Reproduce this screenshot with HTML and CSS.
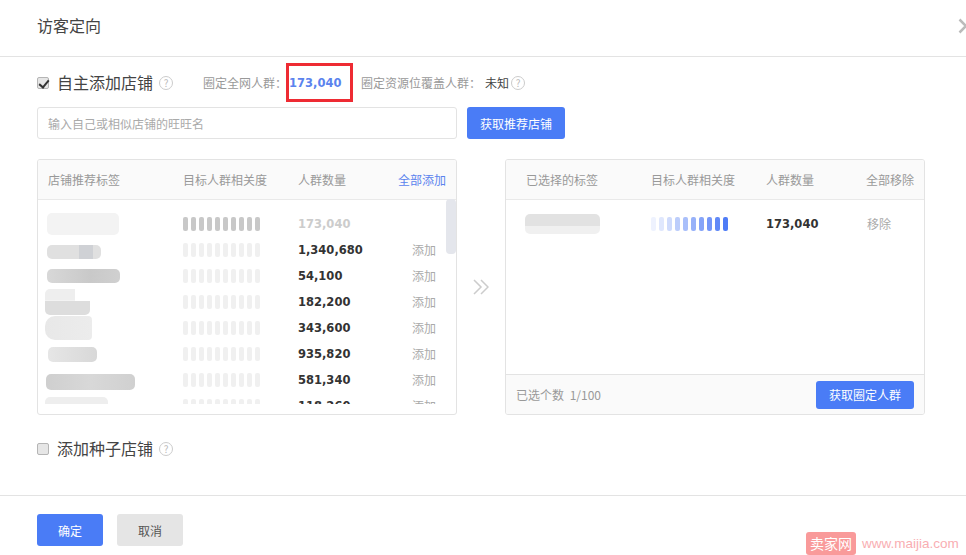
FILE: index.html
```html
<!DOCTYPE html>
<html lang="zh">
<head>
<meta charset="utf-8">
<title>访客定向</title>
<link rel="stylesheet" href="styles.css">
</head>
<body>
<div class="dialog">
  <header class="head">访客定向</header>
  <svg class="close" width="10" height="16" viewBox="0 0 10 16"><path d="M1.500 1.500 8 8l-6.500 6.500" fill="none" stroke="#bbb" stroke-width="2.500"/></svg>
  <main class="main">
    <div class="opt">
      <label class="check"><input type="checkbox" class="cb" checked><span>自主添加店铺</span></label>
      <span class="help">?</span>
      <span class="stat s1">圈定全网人群：</span>
      <b class="hl">173,040</b>
      <span class="stat s2">圈定资源位覆盖人群：</span>
      <span class="unk">未知</span>
      <span class="help small">?</span>
    </div>
    <div class="search">
      <input class="inp" type="text" placeholder="输入自己或相似店铺的旺旺名">
      <button class="btn btn-wide" type="button">获取推荐店铺</button>
    </div>
    <div class="panels">
      <section class="panel">
        <div class="row th">
          <span>店铺推荐标签</span><span>目标人群相关度</span><span>人群数量</span><a class="all">全部添加</a>
        </div>
        <div class="list">
          <div class="row"><span><i class="blob b0"></i></span><span class="bars dark"><i></i><i></i><i></i><i></i><i></i><i></i><i></i><i></i><i></i><i></i></span><b class="num off">173,040</b><span></span></div>
          <div class="row"><span><i class="blob b1"></i></span><span class="bars"><i></i><i></i><i></i><i></i><i></i><i></i><i></i><i></i><i></i><i></i></span><b class="num">1,340,680</b><span class="act">添加</span></div>
          <div class="row"><span><i class="blob b2"></i></span><span class="bars"><i></i><i></i><i></i><i></i><i></i><i></i><i></i><i></i><i></i><i></i></span><b class="num">54,100</b><span class="act">添加</span></div>
          <div class="row"><span><i class="blob b3"></i></span><span class="bars"><i></i><i></i><i></i><i></i><i></i><i></i><i></i><i></i><i></i><i></i></span><b class="num">182,200</b><span class="act">添加</span></div>
          <div class="row"><span><i class="blob b4"></i></span><span class="bars"><i></i><i></i><i></i><i></i><i></i><i></i><i></i><i></i><i></i><i></i></span><b class="num">343,600</b><span class="act">添加</span></div>
          <div class="row"><span><i class="blob b5"></i></span><span class="bars"><i></i><i></i><i></i><i></i><i></i><i></i><i></i><i></i><i></i><i></i></span><b class="num">935,820</b><span class="act">添加</span></div>
          <div class="row"><span><i class="blob b6"></i></span><span class="bars"><i></i><i></i><i></i><i></i><i></i><i></i><i></i><i></i><i></i><i></i></span><b class="num">581,340</b><span class="act">添加</span></div>
          <div class="row"><span><i class="blob b7"></i></span><span class="bars"><i></i><i></i><i></i><i></i><i></i><i></i><i></i><i></i><i></i><i></i></span><b class="num">118,260</b><span class="act">添加</span></div>
        </div>
        <div class="thumb"></div>
      </section>
      <div class="arrow">
        <svg width="16" height="16" viewBox="0 0 16 16"><path d="M1 1l7 7-7 7M8 1l7 7-7 7" fill="none" stroke="#ccc" stroke-width="1.500"/></svg>
      </div>
      <section class="panel">
        <div class="row th right">
          <span>已选择的标签</span><span>目标人群相关度</span><span>人群数量</span><span>全部移除</span>
        </div>
        <div class="list picked">
          <div class="row right"><span><i class="blob b8"></i></span><span class="bars blue"><i></i><i></i><i></i><i></i><i></i><i></i><i></i><i></i><i></i><i></i></span><b class="num">173,040</b><span class="act">移除</span></div>
        </div>
        <div class="foot">
          <span class="count">已选个数 1/100</span>
          <button class="btn btn-wide btn-low" type="button">获取圈定人群</button>
        </div>
      </section>
    </div>
    <div class="opt seed">
      <label class="check"><input type="checkbox" class="cb"><span>添加种子店铺</span></label>
      <span class="help">?</span>
    </div>
  </main>
  <footer class="actions">
    <button class="btn btn-act" type="button">确定</button>
    <button class="btn btn-act btn-gray" type="button">取消</button>
  </footer>
  <div class="redbox"></div>
  <div class="mark"><span class="mark-tag">卖家网</span><span class="mark-url">www.maijia.com</span></div>
</div>
</body>
</html>
```

FILE: styles.css
```css
* { box-sizing: border-box; }
html, body { margin: 0; height: 100%; overflow: hidden; background: #fff; }
body { font-family: "Noto Sans CJK SC", "Liberation Sans", sans-serif; font-size: 12px; color: #333; }
.dialog { position: relative; width: 966px; height: 555px; overflow: hidden; }
.head { height: 57px; padding: 14px 0 0 37px; font-size: 16px; line-height: 22px; color: #444; border-bottom: 1px solid #e3e3e3; }
.close { position: absolute; left: 958px; top: 18px; }
.main { padding: 13px 41px 0 37px; }
.opt { display: flex; align-items: center; height: 26px; }
.check { display: flex; align-items: center; font-size: 16px; color: #444; }
.check span { margin-bottom: 2px; }
.cb { appearance: none; position: relative; width: 12px; height: 12px; margin: 0 8px 0 0; background: #e6e6e6; border: 1px solid #b5b5b5; border-radius: 2px; }
.cb:checked::after { content: ""; position: absolute; left: 3px; top: 0; width: 4px; height: 8px; border: solid #333; border-width: 0 2px 2px 0; transform: rotate(40deg); }
.help { display: inline-block; width: 14px; height: 14px; margin-left: 6px; border: 1px solid #ccc; border-radius: 50%; color: #bbb; font-size: 10px; line-height: 12px; text-align: center; }
.help.small { margin-left: 2px; }
.stat { margin-bottom: 2px; color: #999; }
.s1 { margin-left: 30px; }
.hl { width: 52px; margin-left: 2px; font: bold 11.5px "DejaVu Sans", sans-serif; color: #5b83ee; white-space: nowrap; }
.s2 { margin-left: 20px; }
.unk { margin: 0 0 2px 4px; color: #444; }
.search { display: flex; gap: 10px; margin-top: 11px; }
.inp { width: 420px; height: 32px; padding: 0 10px; border: 1px solid #e3e3e3; border-radius: 3px; font: 12px "Noto Sans CJK SC", sans-serif; outline: none; }
.inp::placeholder { color: #aaa; opacity: 1; }
.btn { height: 32px; padding: 0; border: 0; border-radius: 3px; background: #4a7cf6; color: #fff; font: 12px "Noto Sans CJK SC", sans-serif; }
.btn-wide { width: 98px; }
.btn-low { height: 28px; }
.panels { display: flex; margin-top: 20px; }
.panel { position: relative; display: flex; flex-direction: column; width: 420px; height: 256px; border: 1px solid #e3e3e3; border-radius: 3px; overflow: hidden; }
.arrow { display: flex; align-items: center; justify-content: center; width: 48px; }
.row { display: grid; grid-template-columns: 135px 115px 114px 1fr; grid-template-rows: 26px; align-items: center; height: 26px; padding: 0 10px; flex: none; line-height: 16px; }
.row.right { grid-template-columns: 125px 115px 100px 1fr; padding: 0 10px 0 20px; }
.row.right .act { margin-left: 1px; }
.th { height: 40px; grid-template-columns: 135px 115px 80px 1fr; grid-template-rows: 39px; background: #fafafa; border-bottom: 1px solid #e9e9e9; color: #999; white-space: nowrap; }
.th.right { grid-template-rows: 39px; }
.th .all { justify-self: end; color: #5b83ee; }
.list { height: 204px; padding-top: 11px; overflow: hidden; flex: none; }
.picked { flex: 1; height: auto; }
.num { font: bold 11.5px "DejaVu Sans", sans-serif; color: #333; white-space: nowrap; }
.num.off { color: #ccc; }
.act { color: #aaa; white-space: nowrap; }
.bars { display: flex; gap: 3px; }
.bars i { width: 5px; height: 14px; border-radius: 2px; background: #f0f0f0; }
.bars.dark i { background: #c8c8c8; }
.blue i:nth-child(1) { background: #eef2fe; }
.blue i:nth-child(2) { background: #dfe7fd; }
.blue i:nth-child(3) { background: #cfdbfc; }
.blue i:nth-child(4) { background: #bccdfb; }
.blue i:nth-child(5) { background: #a9bffa; }
.blue i:nth-child(6) { background: #97b1f9; }
.blue i:nth-child(7) { background: #86a4f8; }
.blue i:nth-child(8) { background: #7496f8; }
.blue i:nth-child(9) { background: #6189f7; }
.blue i:nth-child(10) { background: #4f7cf6; }
.blob { display: block; filter: blur(0.7px); border-radius: 5px; }
.b0 { width: 72px; height: 22px; margin-left: -1px; background: #f3f3f3; }
.b1 { width: 54px; height: 14px; margin: 4px 0 0 -1px; background: linear-gradient(90deg, #e0e0e0 60%, #cfd1d5 60% 85%, #e0e0e0 85%); }
.b2 { width: 73px; height: 14px; margin-left: -1px; background: linear-gradient(90deg, #d8d8d8, #c9c9c9 60%, #d0d0d0); }
.b3 { width: 45px; height: 26px; margin: 0 0 0 -3px; background: linear-gradient(#eee, #eee) left top / 30px 45% no-repeat, linear-gradient(#ddd, #ddd) left bottom / 100% 55% no-repeat; }
.b4 { width: 47px; height: 24px; margin-left: -3px; background: linear-gradient(90deg, #e8e8e8, #ececec); border-radius: 10px 4px 4px 10px; }
.b5 { width: 49px; height: 15px; background: linear-gradient(90deg, #e6e6e6, #d8d8d8); }
.b6 { width: 89px; height: 16px; margin: 4px 0 0 -2px; background: linear-gradient(90deg, #cfcfcf, #d8d8d8 50%, #d0d0d0); }
.b7 { width: 63px; height: 18px; margin-left: -3px; background: #eee; }
.b8 { width: 75px; height: 20px; margin-left: -1px; background: linear-gradient(#e2e2e2 60%, #f0f0f0 60%); }
.thumb { position: absolute; left: 408px; top: 39px; width: 10px; height: 55px; border-radius: 4px; background: #e4e6ec; }
.foot { display: flex; align-items: center; justify-content: space-between; height: 40px; padding: 0 10px; background: #fafafa; border-top: 1px solid #e3e3e3; color: #999; flex: none; }
.count { word-spacing: 3px; }
.seed { margin-top: 21px; }
.actions { display: flex; gap: 14px; margin-top: 33px; padding: 18px 37px 0; border-top: 1px solid #e3e3e3; }
.btn-act { width: 66px; }
.btn-gray { background: #e5e5e5; color: #555; }
.redbox { position: absolute; left: 286px; top: 63px; width: 67px; height: 39px; border: 3px solid #ee2b33; }
.mark { position: absolute; left: 806px; top: 532px; display: flex; align-items: center; }
.mark-tag { width: 50px; height: 23px; border-radius: 3px; background: #f99a9a; color: #fff; font-size: 14px; line-height: 23px; text-align: center; }
.mark-url { margin-left: 6px; color: #f9aeb2; font: 13.5px "Liberation Sans", sans-serif; white-space: nowrap; }
```
